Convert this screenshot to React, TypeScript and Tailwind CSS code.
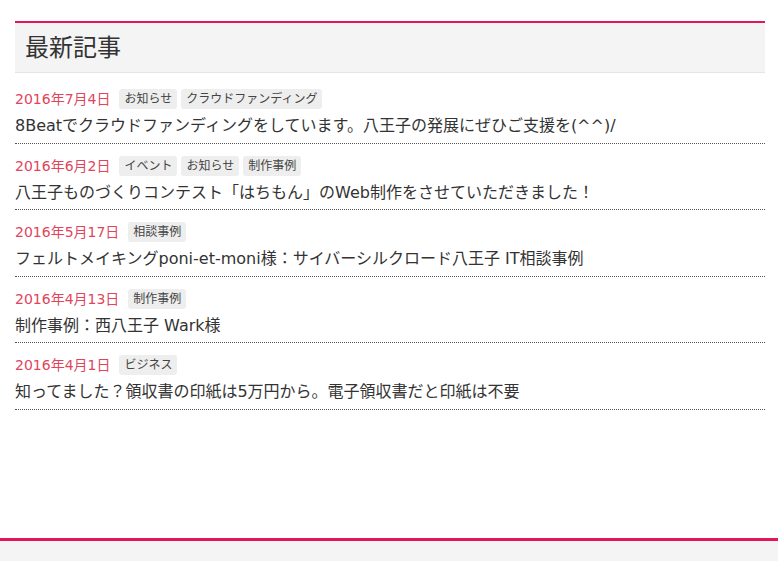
const posts = [
  {
    date: "2016年7月4日",
    tags: ["お知らせ", "クラウドファンディング"],
    title: "8Beatでクラウドファンディングをしています。八王子の発展にぜひご支援を(^^)/",
  },
  {
    date: "2016年6月2日",
    tags: ["イベント", "お知らせ", "制作事例"],
    title: "八王子ものづくりコンテスト「はちもん」のWeb制作をさせていただきました！",
  },
  {
    date: "2016年5月17日",
    tags: ["相談事例"],
    title: "フェルトメイキングponi-et-moni様：サイバーシルクロード八王子 IT相談事例",
  },
  {
    date: "2016年4月13日",
    tags: ["制作事例"],
    title: "制作事例：西八王子 Wark様",
  },
  {
    date: "2016年4月1日",
    tags: ["ビジネス"],
    title: "知ってました？領収書の印紙は5万円から。電子領収書だと印紙は不要",
  },
];

export default function App() {
  return (
    <div
      className="min-h-screen bg-white text-[#333]"
      style={{ fontFamily: '"DejaVu Sans", "Noto Sans CJK JP", sans-serif' }}
    >
      <div className="pl-[15px] pr-[13px] pt-[21px]">
        <section>
          <h2 className="border-t-2 border-b border-t-[#e2175b] border-b-[#e5e5e5] bg-[#f4f4f4] pl-[10px] pr-[10px] pt-[1px] h-[52px] flex items-center text-[24px] leading-none font-normal text-[#333]">
            最新記事
          </h2>

          <ul className="mt-[4px]">
            {posts.map((p) => (
              <li key={p.title} className="border-b border-dotted border-[#555] pt-[12px] pb-[3.5px]">
                <div className="flex items-center h-[20px]">
                  <span className="text-[14px] leading-none text-[#e2445c] mr-[9px]">{p.date}</span>
                  <div className="flex gap-[4px]">
                    {p.tags.map((t) => (
                      <span
                        key={t}
                        className="bg-[#eeeeee] rounded-[3px] px-[5px] h-[20px] flex items-center text-[12px] leading-none text-[#444]"
                      >
                        {t}
                      </span>
                    ))}
                  </div>
                </div>
                <p className="mt-[4px] text-[16px] leading-[26px] text-[#333]">{p.title}</p>
              </li>
            ))}
          </ul>
        </section>
      </div>

      <footer className="mt-[128px] border-t-[3px] border-[#e2175b] bg-[#f4f4f4] h-[23px]" />
    </div>
  );
}
